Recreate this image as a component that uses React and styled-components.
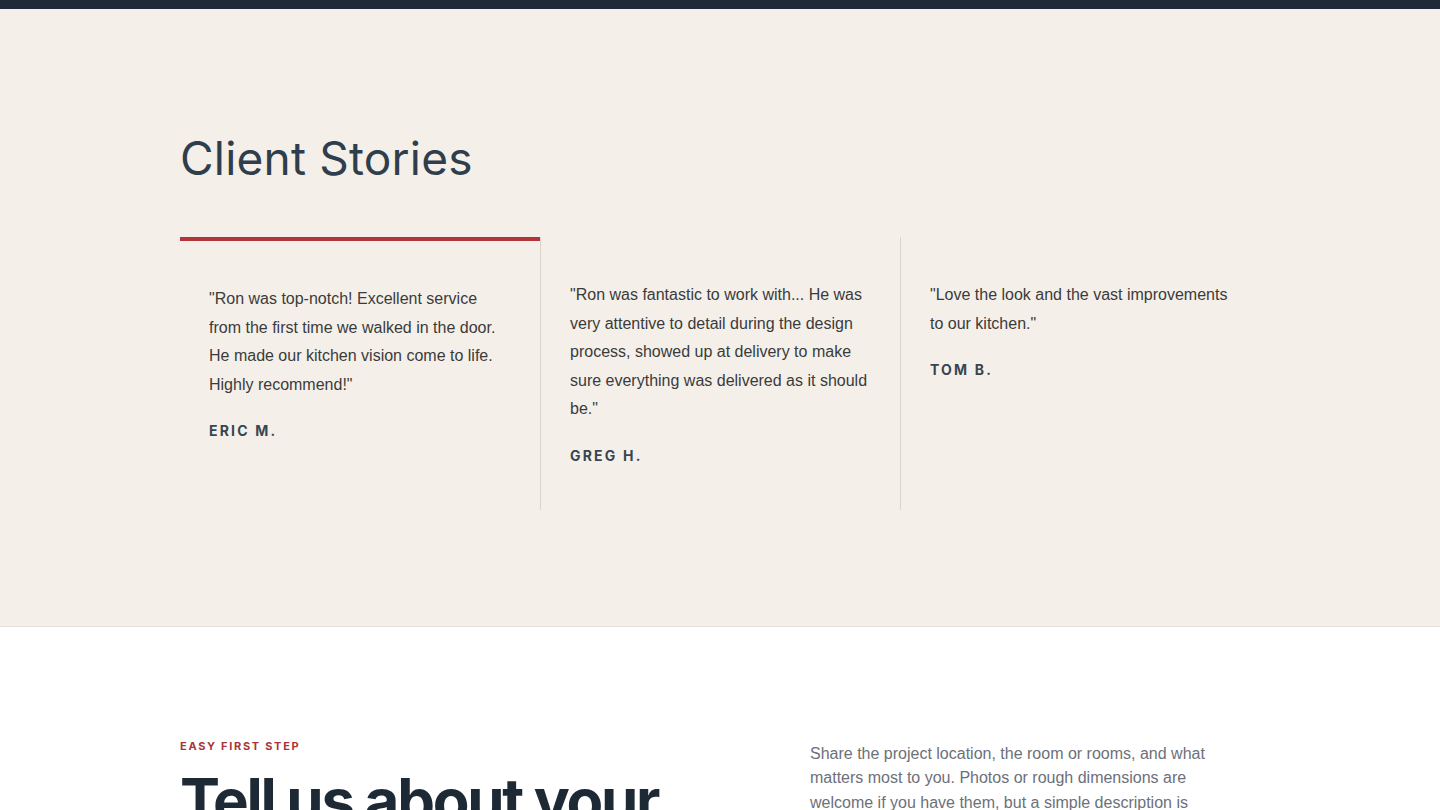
import React from "react";
import styled, { createGlobalStyle } from "styled-components";

const Global = createGlobalStyle`
  body {
    margin: 0;
    background: #ffffff;
    font-family: "Liberation Sans", Arial, sans-serif;
  }
  * { box-sizing: border-box; }
`;

const TopBar = styled.div`
  height: 9px;
  background-color: #1f2937;
`;

const Stories = styled.section`
  background-color: #f4f0e9;
  border-bottom: 1px solid #e6e1d8;
  padding: 122px 0 116px;
`;

const Container = styled.div`
  width: 1080px;
  margin: 0 auto;
`;

const Title = styled.h2`
  margin: 0 0 51px;
  font-family: Inter, "Noto Sans", sans-serif;
  font-weight: 400;
  font-size: 46px;
  line-height: 1.2;
  letter-spacing: 0.2px;
  color: #2f3e4c;
`;

const Grid = styled.div`
  display: grid;
  grid-template-columns: repeat(3, 1fr);
  align-items: stretch;
`;

const Card = styled.article`
  padding: 44px 29px 46px;
  border-top: ${(p) => (p.$active ? "4px solid #b3343a" : "none")};
  border-left: ${(p) => (p.$first ? "none" : "1px solid #d9d4cc")};
`;

const Quote = styled.p`
  margin: 0 0 23px;
  font-size: 16px;
  line-height: 28.5px;
  color: #3b3b3b;
`;

const Name = styled.div`
  font-family: Inter, "Noto Sans", sans-serif;
  font-weight: 700;
  font-size: 14px;
  letter-spacing: 2.2px;
  color: #394550;
  text-transform: uppercase;
`;

const Contact = styled.section`
  background-color: #ffffff;
  padding: 112px 0 40px;
`;

const ContactGrid = styled(Container)`
  display: grid;
  grid-template-columns: 570px 1fr;
  column-gap: 60px;
  align-items: start;
`;

const Eyebrow = styled.div`
  font-family: Inter, "Noto Sans", sans-serif;
  font-weight: 700;
  font-size: 11px;
  letter-spacing: 1.7px;
  color: #a8343a;
  text-transform: uppercase;
  margin-bottom: 16px;
`;

const BigHeading = styled.h2`
  margin: 0;
  font-family: Inter, "Noto Sans", sans-serif;
  font-weight: 700;
  font-size: 60px;
  line-height: 1.05;
  letter-spacing: -2.3px;
  color: #1e2936;
`;

const Lead = styled.p`
  margin: 3px 0 0;
  max-width: 410px;
  font-size: 16px;
  line-height: 24.5px;
  color: #6d7079;
`;

const stories = [
  {
    quote:
      "\"Ron was top-notch! Excellent service from the first time we walked in the door. He made our kitchen vision come to life. Highly recommend!\"",
    name: "Eric M.",
  },
  {
    quote:
      "\"Ron was fantastic to work with... He was very attentive to detail during the design process, showed up at delivery to make sure everything was delivered as it should be.\"",
    name: "Greg H.",
  },
  {
    quote: "\"Love the look and the vast improvements to our kitchen.\"",
    name: "Tom B.",
  },
];

const App = () => {
  return (
    <>
      <Global />
      <TopBar />
      <Stories>
        <Container>
          <Title>Client Stories</Title>
          <Grid>
            {stories.map((s, i) => (
              <Card key={s.name} $active={i === 0} $first={i === 0}>
                <Quote>{s.quote}</Quote>
                <Name>{s.name}</Name>
              </Card>
            ))}
          </Grid>
        </Container>
      </Stories>
      <Contact>
        <ContactGrid>
          <div>
            <Eyebrow>Easy first step</Eyebrow>
            <BigHeading>Tell us about your project</BigHeading>
          </div>
          <Lead>
            Share the project location, the room or rooms, and what matters
            most to you. Photos or rough dimensions are welcome if you have
            them, but a simple description is enough to get started.
          </Lead>
        </ContactGrid>
      </Contact>
    </>
  );
};

export default App;
